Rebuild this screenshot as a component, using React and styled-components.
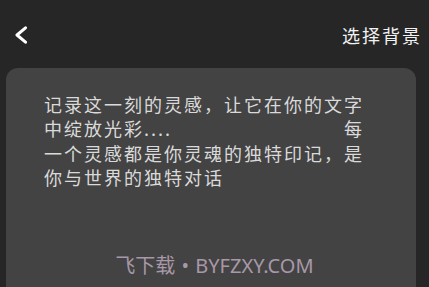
import React from 'react'
import styled, { createGlobalStyle } from 'styled-components'

const GlobalStyle = createGlobalStyle`
  html, body {
    margin: 0;
    padding: 0;
    background: #262626;
    overflow: hidden;
  }
  body {
    font-family: "Noto Sans CJK SC", "Noto Sans", sans-serif;
  }
`

const Page = styled.div`
  width: 429px;
  height: 287px;
  background: #262626;
  overflow: hidden;
  position: relative;
`

const Header = styled.div`
  height: 68px;
  display: flex;
  align-items: center;
  justify-content: space-between;
  padding: 0 7px 0 14px;
`

const BackButton = styled.div`
  display: flex;
  align-items: center;
  cursor: pointer;
  margin-top: 1px;
`

const Title = styled.div`
  color: #f2f2f2;
  font-size: 18px;
  letter-spacing: 2px;
  line-height: 1;
  margin-top: 1px;
`

const Card = styled.div`
  margin: 0 13px 0 6px;
  height: 240px;
  background: #434343;
  border-radius: 12px;
  padding: 24px 0 0 38px;
  box-sizing: border-box;
`

const Paragraph = styled.div`
  width: 320px;
  color: #dadada;
  font-size: 18px;
  line-height: 24.4px;
  letter-spacing: 2px;
`

const Line = styled.div`
  display: flex;
  justify-content: ${props => (props.spread ? 'space-between' : 'flex-start')};
  white-space: nowrap;
`

const Watermark = styled.div`
  position: absolute;
  left: 0;
  right: 0;
  bottom: 9px;
  text-align: center;
  color: #a898a8;
  font-family: "Noto Sans", "Noto Sans CJK SC", sans-serif;
  font-size: 20px;
  line-height: 24px;
  word-spacing: 1px;
`

const ChevronLeft = () => (
  <svg width="14" height="18" viewBox="0 0 14 18">
    <polyline points="11.5,1.8 3,9 11.5,16.2" fill="none" stroke="#ffffff" strokeWidth="3" strokeLinecap="round" strokeLinejoin="round" />
  </svg>
)

const App = () => {
  return (
    <Page>
      <GlobalStyle />
      <Header>
        <BackButton>
          <ChevronLeft />
        </BackButton>
        <Title>选择背景</Title>
      </Header>
      <Card>
        <Paragraph>
          <Line>记录这一刻的灵感，让它在你的文字</Line>
          <Line spread>
            <span>中绽放光彩....</span>
            <span>每</span>
          </Line>
          <Line>一个灵感都是你灵魂的独特印记，是</Line>
          <Line>你与世界的独特对话</Line>
        </Paragraph>
      </Card>
      <Watermark>飞下载 • BYFZXY.COM</Watermark>
    </Page>
  )
}

export default App
